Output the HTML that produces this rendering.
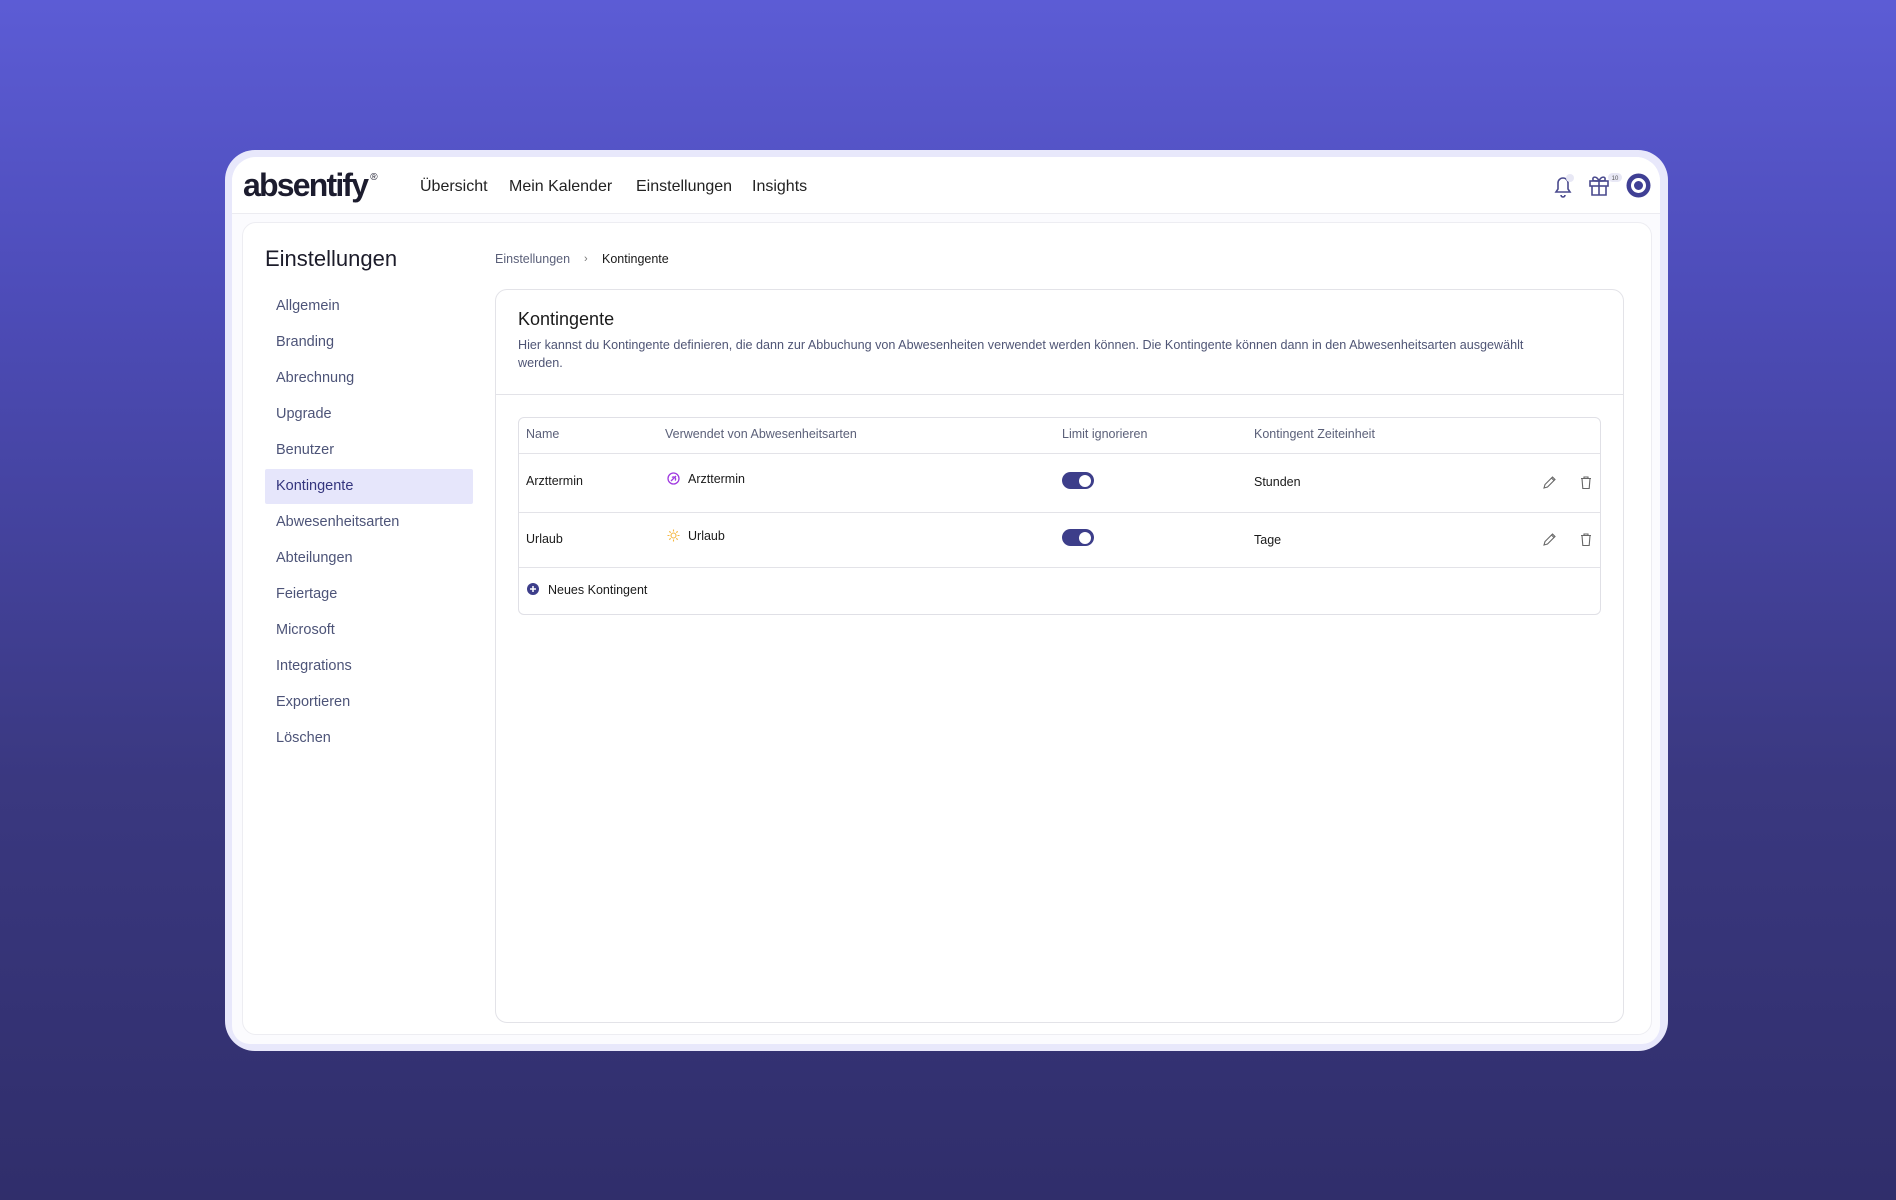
<!DOCTYPE html>
<html><head><meta charset="utf-8"><style>
*{box-sizing:border-box;margin:0;padding:0}
body{width:1896px;height:1200px;overflow:hidden;font-family:"Liberation Sans",sans-serif;background:linear-gradient(180deg,#5c5cd5 0%,#4d4cb8 25%,#3a3880 65%,#302e6b 100%);position:relative}
.frame{position:absolute;left:225px;top:150px;width:1443px;height:901px;background:#e8e8fb;border-radius:30px}
.inner{position:absolute;left:232px;top:157px;width:1428px;height:887px;background:#fbfbfe;border-radius:24px 24px 18px 18px}
.hdr{position:absolute;left:232px;top:157px;width:1428px;height:57px;background:#fff;border-radius:24px 24px 0 0;border-bottom:1px solid #ececf1}
.logo{position:absolute;left:243px;top:167px;font-size:32px;font-weight:bold;color:#1c1c2e;letter-spacing:-1.8px}
.logo sup{font-size:10px;font-weight:normal;position:relative;top:-4px;left:3px}
.nav{position:absolute;top:178px;font-size:16px;color:#222}
.content{position:absolute;left:242px;top:222px;width:1410px;height:813px;background:#fff;border:1px solid #ededf2;border-radius:14px}
.h1{position:absolute;left:265px;top:246px;font-size:22px;color:#1c1c2a}
.side{position:absolute;left:276px;font-size:14.5px;color:#4d5478}
.active{position:absolute;left:265px;top:469px;width:208px;height:35px;background:#e6e6fb;border-radius:2px}
.bc{position:absolute;top:252px;font-size:12.5px}
.card{position:absolute;left:495px;top:289px;width:1129px;height:734px;border:1px solid #e3e3e8;border-radius:12px;background:#fff}
.t{position:absolute;font-size:12.5px;color:#1a1a1a}
.th{position:absolute;font-size:12.5px;color:#5b6079;top:427px}
.tbl{position:absolute;left:518px;top:417px;width:1083px;height:198px;border:1px solid #e0e0e6;border-radius:6px}
.hl{position:absolute;left:519px;width:1081px;height:1px;background:#e3e3e8}
.tog{position:absolute;left:1062px;width:32px;height:17px;background:#3d3e8a;border-radius:9px}
.tog:after{content:"";position:absolute;right:3px;top:2.5px;width:12px;height:12px;border-radius:50%;background:#fff}
</style></head><body>
<div class="frame"></div>
<div class="inner"></div>
<div class="hdr"></div>
<div class="logo">absentify<sup>®</sup></div>
<div class="nav" style="left:420px">Übersicht</div>
<div class="nav" style="left:509px">Mein Kalender</div>
<div class="nav" style="left:636px">Einstellungen</div>
<div class="nav" style="left:752px">Insights</div>
<svg style="position:absolute;left:1550px;top:173px" width="26" height="26" viewBox="0 0 26 26" fill="none" stroke="#4a4a8e" stroke-width="1.6"><path d="M6 19h14l-2-3v-6a5 5 0 0 0-10 0v6z"/><path d="M11 22a2 2 0 0 0 4 0"/><circle cx="20" cy="5" r="4" fill="#e8e8f5" stroke="none"/></svg>
<svg style="position:absolute;left:1588px;top:172px" width="36" height="26" viewBox="0 0 36 26" fill="none" stroke="#4a4a8e" stroke-width="1.6"><rect x="2" y="9" width="18" height="5"/><path d="M4 14v9h14v-9M11 9v14M11 9c-2-5-7-5-6-1 0 1 3 1 6 1zM11 9c2-5 7-5 6-1 0 1-3 1-6 1z"/><rect x="20" y="1" width="14" height="9" rx="4.5" fill="#e8e8f5" stroke="none"/><text x="27" y="8" font-size="6" fill="#555" stroke="none" text-anchor="middle" font-family="Liberation Sans">10</text></svg>
<svg style="position:absolute;left:1626px;top:173px" width="25" height="25" viewBox="0 0 25 25"><circle cx="12.5" cy="12.5" r="12" fill="#3f3f94"/><circle cx="12.5" cy="12.5" r="6" fill="none" stroke="#fff" stroke-width="3"/></svg>
<div class="content"></div>
<div class="h1">Einstellungen</div>
<div class="active"></div>
<div class="side" style="top:298px">Allgemein</div>
<div class="side" style="top:334px">Branding</div>
<div class="side" style="top:370px">Abrechnung</div>
<div class="side" style="top:406px">Upgrade</div>
<div class="side" style="top:442px">Benutzer</div>
<div class="side" style="top:478px;color:#34357e">Kontingente</div>
<div class="side" style="top:514px">Abwesenheitsarten</div>
<div class="side" style="top:550px">Abteilungen</div>
<div class="side" style="top:586px">Feiertage</div>
<div class="side" style="top:622px">Microsoft</div>
<div class="side" style="top:658px">Integrations</div>
<div class="side" style="top:694px">Exportieren</div>
<div class="side" style="top:730px">Löschen</div>
<div class="bc" style="left:495px;color:#5b6079">Einstellungen</div>
<div class="bc" style="left:584px;color:#777;font-size:11px;top:253px">›</div>
<div class="bc" style="left:602px;color:#1a1a1a">Kontingente</div>
<div class="card"></div>
<div class="t" style="left:518px;top:309px;font-size:18px">Kontingente</div>
<div class="t" style="left:518px;top:336px;width:1050px;line-height:18px;font-size:12.6px;color:#4f5575">Hier kannst du Kontingente definieren, die dann zur Abbuchung von Abwesenheiten verwendet werden können. Die Kontingente können dann in den Abwesenheitsarten ausgewählt werden.</div>
<div style="position:absolute;left:496px;top:394px;width:1127px;height:1px;background:#e3e3e8"></div>
<div class="tbl"></div>
<div class="th" style="left:526px">Name</div>
<div class="th" style="left:665px">Verwendet von Abwesenheitsarten</div>
<div class="th" style="left:1062px">Limit ignorieren</div>
<div class="th" style="left:1254px">Kontingent Zeiteinheit</div>
<div class="hl" style="top:453px"></div>
<div class="hl" style="top:512px"></div>
<div class="hl" style="top:567px"></div>
<div class="t" style="left:526px;top:474px">Arzttermin</div>
<svg style="position:absolute;left:667px;top:472px" width="13" height="13" viewBox="0 0 13 13" fill="none" stroke="#a03be0" stroke-width="1.3"><circle cx="6.5" cy="6.5" r="5.5"/><path d="M4 9l5-5M5 5.5a2 2 0 0 1 3 3"/></svg>
<div class="t" style="left:688px;top:472px">Arzttermin</div>
<div class="tog" style="top:472px"></div>
<div class="t" style="left:1254px;top:475px">Stunden</div>
<div class="t" style="left:526px;top:532px">Urlaub</div>
<svg style="position:absolute;left:667px;top:529px" width="13" height="13" viewBox="0 0 13 13" fill="none" stroke="#f4b740" stroke-width="1.1"><circle cx="6.5" cy="6.5" r="2.5"/><path d="M6.5 0.5v2M6.5 10.5v2M0.5 6.5h2M10.5 6.5h2M2.3 2.3l1.4 1.4M9.3 9.3l1.4 1.4M2.3 10.7l1.4-1.4M9.3 3.7l1.4-1.4"/></svg>
<div class="t" style="left:688px;top:529px">Urlaub</div>
<div class="tog" style="top:529px"></div>
<div class="t" style="left:1254px;top:533px">Tage</div>
<svg style="position:absolute;left:1542px;top:475px" width="15" height="15" viewBox="0 0 15 15" fill="none" stroke="#666" stroke-width="1.1"><path d="M2 13l1-3.5 7.5-7.5 2.5 2.5-7.5 7.5zM9.5 3l2.5 2.5"/></svg>
<svg style="position:absolute;left:1579px;top:475px" width="14" height="15" viewBox="0 0 14 15" fill="none" stroke="#666" stroke-width="1.1"><path d="M2 3.5h10M5 3.5V2h4v1.5M3 3.5l.8 10h6.4l.8-10"/></svg>
<svg style="position:absolute;left:1542px;top:532px" width="15" height="15" viewBox="0 0 15 15" fill="none" stroke="#666" stroke-width="1.1"><path d="M2 13l1-3.5 7.5-7.5 2.5 2.5-7.5 7.5zM9.5 3l2.5 2.5"/></svg>
<svg style="position:absolute;left:1579px;top:532px" width="14" height="15" viewBox="0 0 14 15" fill="none" stroke="#666" stroke-width="1.1"><path d="M2 3.5h10M5 3.5V2h4v1.5M3 3.5l.8 10h6.4l.8-10"/></svg>
<svg style="position:absolute;left:527px;top:583px" width="12" height="12" viewBox="0 0 12 12"><circle cx="6" cy="6" r="6" fill="#3d3e8a"/><path d="M6 3v6M3 6h6" stroke="#fff" stroke-width="1.5"/></svg>
<div class="t" style="left:548px;top:583px">Neues Kontingent</div>
</body></html>
